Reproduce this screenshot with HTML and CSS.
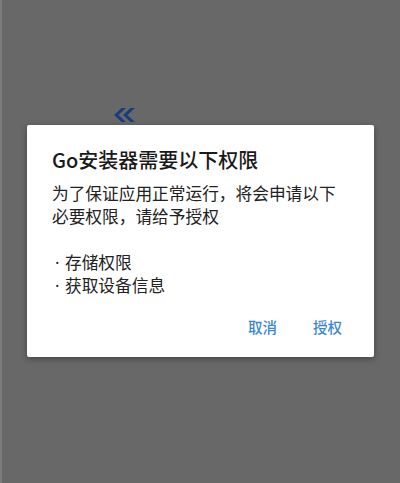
FILE: index.html
```html
<!DOCTYPE html>
<html lang="zh-CN">
<head>
<meta charset="utf-8">
<link rel="stylesheet" href="styles.css">
</head>
<body>
<div class="screen">
  <svg class="chevron" width="24" height="16" viewBox="0 0 24 16">
    <path d="M9.5 1 L2 8 L9.5 15 L14 15 L6.5 8 L14 1 Z" fill="#173f7c"/>
    <path d="M18.5 1 L11 8 L18.5 15 L23 15 L15.5 8 L23 1 Z" fill="#173f7c"/>
  </svg>
  <div class="dialog">
    <div class="title">Go安装器需要以下权限</div>
    <div class="body">
      <p class="line">为了保证应用正常运行，将会申请以下</p>
      <p class="line">必要权限，请给予授权</p>
      <p class="line">&nbsp;</p>
      <p class="line bullet"><span class="dot">·</span>存储权限</p>
      <p class="line bullet"><span class="dot">·</span>获取设备信息</p>
    </div>
    <div class="actions">
      <span class="btn">取消</span>
      <span class="btn">授权</span>
    </div>
  </div>
</div>
</body>
</html>
```

FILE: styles.css
```css
html, body {
  margin: 0;
  padding: 0;
}
body {
  width: 400px;
  height: 483px;
  overflow: hidden;
  font-family: "Noto Sans CJK SC", "Noto Sans", sans-serif;
}
.screen {
  position: relative;
  width: 400px;
  height: 483px;
  background: #686868;
  border-left: 2px solid #7c7c7c;
  padding-top: 125px;
  box-sizing: border-box;
}
.chevron {
  position: absolute;
  left: 110px;
  top: 107px;
}
.dialog {
  margin-left: 25px;
  width: 347px;
  height: 232px;
  background: #ffffff;
  border-radius: 2px;
  box-shadow: 0 2px 6px rgba(0, 0, 0, 0.35);
  box-sizing: border-box;
  padding: 21px 24px 12px 25px;
  display: flex;
  flex-direction: column;
}
.title {
  font-size: 20px;
  line-height: 28px;
  color: #1a1a1a;
  font-weight: 500;
}
.body {
  margin-top: 8px;
  font-size: 16.7px;
  line-height: 23px;
  color: #222222;
}
.line {
  margin: 0;
  white-space: nowrap;
}
.bullet {
  padding-left: 3px;
}
.dot {
  display: inline-block;
  width: 10px;
  font-family: "Noto Sans", sans-serif;
}
.actions {
  margin-top: auto;
  display: flex;
  justify-content: flex-end;
  gap: 20px;
}
.btn {
  font-size: 14.5px;
  line-height: 36px;
  padding: 0 8px;
  color: #3a86d4;
  font-weight: 500;
}
```
